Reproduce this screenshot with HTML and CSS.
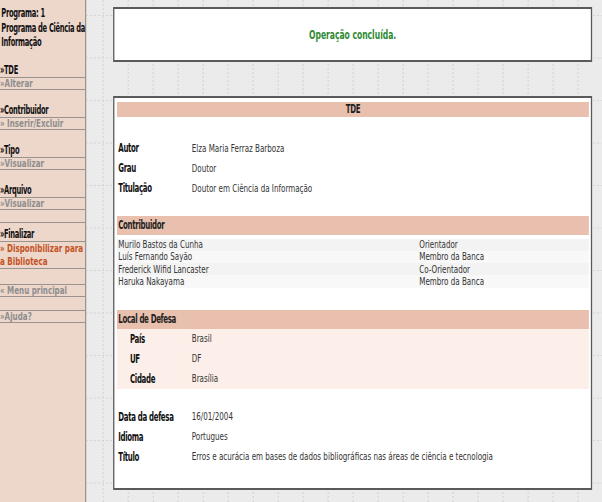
FILE: index.html
```html
<!DOCTYPE html>
<html lang="pt-BR">
<head>
<meta charset="utf-8">
<title>TDE</title>
<link rel="stylesheet" href="styles.css">
</head>
<body>
<div class="frame">
<div class="page">
  <nav class="sidebar">
    <div class="program">Programa: 1<br>Programa de Ciência da<br>Informação</div>
    <div class="section section-first">
      <div class="sec-title">»TDE</div>
      <a class="sec-link">»Alterar</a>
    </div>
    <div class="section">
      <div class="sec-title">»Contribuidor</div>
      <a class="sec-link">» Inserir/Excluir</a>
    </div>
    <div class="section">
      <div class="sec-title">»Tipo</div>
      <a class="sec-link">»Visualizar</a>
    </div>
    <div class="section">
      <div class="sec-title">»Arquivo</div>
      <a class="sec-link">»Visualizar</a>
    </div>
    <div class="section section-final">
      <div class="sec-title">»Finalizar</div>
      <a class="sec-link sec-link-active">» Disponibilizar para<br>a Biblioteca</a>
    </div>
    <a class="sec-link sec-link-menu">« Menu principal</a>
    <a class="sec-link sec-link-help">»Ajuda?</a>
  </nav>
  <main class="content">
    <div class="notice">Operação concluída.</div>
    <section class="panel">
      <div class="band band-center">TDE</div>
      <div class="fields fields-top">
        <div class="row"><span class="label">Autor</span><span class="value">Elza Maria Ferraz Barboza</span></div>
        <div class="row"><span class="label">Grau</span><span class="value">Doutor</span></div>
        <div class="row"><span class="label">Titulação</span><span class="value">Doutor em Ciência da Informação</span></div>
      </div>
      <div class="band band-contrib">Contribuidor</div>
      <div class="contribs">
        <div class="crow"><span class="cname">Murilo Bastos da Cunha</span><span class="crole">Orientador</span></div>
        <div class="crow"><span class="cname">Luís Fernando Sayão</span><span class="crole">Membro da Banca</span></div>
        <div class="crow"><span class="cname">Frederick Wifid Lancaster</span><span class="crole">Co-Orientador</span></div>
        <div class="crow"><span class="cname">Haruka Nakayama</span><span class="crole">Membro da Banca</span></div>
      </div>
      <div class="band band-local">Local de Defesa</div>
      <div class="fields local">
        <div class="row"><span class="label">País</span><span class="value">Brasil</span></div>
        <div class="row"><span class="label">UF</span><span class="value">DF</span></div>
        <div class="row"><span class="label">Cidade</span><span class="value">Brasília</span></div>
      </div>
      <div class="fields fields-bottom">
        <div class="row"><span class="label">Data da defesa</span><span class="value">16/01/2004</span></div>
        <div class="row"><span class="label">Idioma</span><span class="value">Portugues</span></div>
        <div class="row"><span class="label">Título</span><span class="value">Erros e acurácia em bases de dados bibliográficas nas áreas de ciência e tecnologia</span></div>
      </div>
    </section>
  </main>
</div>
</div>
</body>
</html>
```

FILE: styles.css
```css
html, body {
  margin: 0;
  padding: 0;
  height: 100%;
  overflow: hidden;
  background: #ebebeb;
}

.frame {
  width: 100%;
  height: 100vh;
  overflow: hidden;
  contain: paint;
}

/* The reference is a horizontally condensed capture; the page is laid out
   at its natural width and condensed as a whole. */
.page {
  width: 926px;
  height: 100vh;
  display: flex;
  transform: scaleX(0.65);
  transform-origin: 0 0;
}

/* ---------- Sidebar ---------- */
.sidebar {
  flex: none;
  width: 131px;
  background: #edd6ca;
  border-right: 2px solid #8e8782;
  padding-top: 6px;
  font-family: "DejaVu Sans Condensed", "DejaVu Sans", sans-serif;
  font-stretch: condensed;
  color: #111;
}

.program {
  font-weight: bold;
  font-size: 11.5px;
  letter-spacing: -0.45px;
  line-height: 14.5px;
  padding-left: 2px;
  white-space: nowrap;
}

.section {
  margin-top: 13px;
}

.section-first {
  margin-top: 13.5px;
}

.section-final {
  margin-top: 12px;
  border-top: 1px solid #9c928d;
  padding-top: 4px;
}

.sec-title {
  font-weight: bold;
  font-size: 11.5px;
  letter-spacing: -0.45px;
  line-height: 14px;
  white-space: nowrap;
}

.sec-link {
  display: block;
  border-top: 1px solid #9c928d;
  border-bottom: 1px solid #9c928d;
  font-family: "DejaVu Sans", sans-serif;
  font-stretch: normal;
  font-weight: bold;
  font-size: 11px;
  line-height: 11px;
  color: #8e8e8e;
  white-space: nowrap;
}

.sec-link-active {
  color: #c4521f;
  line-height: 13px;
}

.sec-link-menu {
  margin-top: 15px;
}

.sec-link-help {
  margin-top: 13px;
}

/* ---------- Content ---------- */
.content {
  flex: 1;
  padding: 7px 15px 0 41px;
  background-color: #ebebeb;
  background-image:
    conic-gradient(from 270deg at 1.5px 2px, #d2d2d2 25%, transparent 0),
    conic-gradient(from 270deg at 3px 1px, #d2d2d2 25%, transparent 0);
  background-size: 38.46px 4px, 6px 42.5px;
  background-position: 25px 0, 0 15px;
}

.notice {
  height: 51px;
  border: 2px solid #5a5a5a;
  background: #fff;
  display: flex;
  align-items: center;
  justify-content: center;
  font-family: "DejaVu Sans Condensed", "DejaVu Sans", sans-serif;
  font-stretch: condensed;
  font-weight: bold;
  font-size: 13px;
  color: #2f8a34;
}

.panel {
  margin-top: 34px;
  border: 2px solid #5a5a5a;
  background: #fff;
  padding: 4px 3px 21px 4px;
}

.band {
  background: #e9bfae;
  height: 19px;
  line-height: 19px;
  padding-left: 2px;
  font-family: "DejaVu Sans Condensed", "DejaVu Sans", sans-serif;
  font-stretch: condensed;
  font-weight: bold;
  font-size: 12px;
  letter-spacing: -0.5px;
  color: #1e1e1e;
}

.band-center {
  height: 15px;
  line-height: 15px;
  text-align: center;
  padding-left: 0;
}

.band-contrib {
  margin-top: 18px;
}

.band-local {
  margin-top: 22px;
}

.fields-top {
  margin-top: 21px;
}

.fields-bottom {
  margin-top: 18px;
}

.row {
  display: flex;
  align-items: center;
  height: 20px;
  padding-left: 2px;
}

.label {
  flex: none;
  width: 113px;
  font-family: "DejaVu Sans Condensed", "DejaVu Sans", sans-serif;
  font-stretch: condensed;
  font-weight: bold;
  font-size: 12px;
  letter-spacing: -0.5px;
  color: #111;
}

.value {
  font-family: "DejaVu Sans", sans-serif;
  font-size: 11px;
  color: #333;
  white-space: nowrap;
}

.local {
  background: #fcefe9;
}

.local .row {
  padding-left: 20px;
}

.local .label {
  width: 95px;
}

.contribs {
  margin-top: 3.5px;
}

.crow {
  display: flex;
  align-items: center;
  height: 12.3px;
  padding-left: 2px;
  background: #f3f3f3;
  font-family: "DejaVu Sans", sans-serif;
  font-size: 11px;
  color: #333;
  white-space: nowrap;
}

.crow:nth-child(even) {
  background: #f8f8f8;
}

.cname {
  flex: none;
  width: 463px;
}
```
